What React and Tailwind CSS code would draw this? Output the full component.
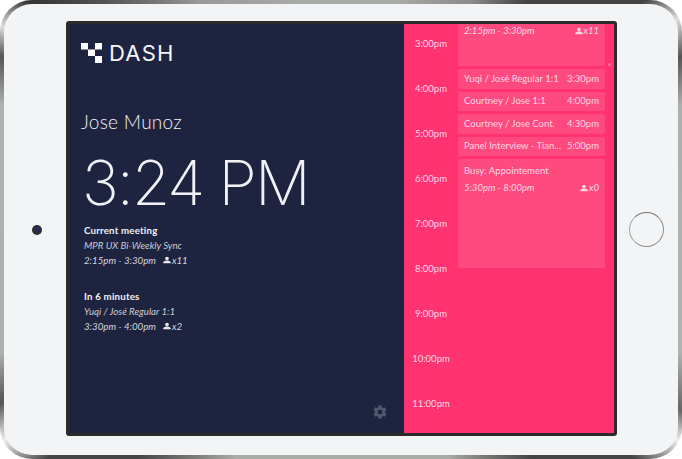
import React from 'react';

const hours = ['3:00pm', '4:00pm', '5:00pm', '6:00pm', '7:00pm', '8:00pm', '9:00pm', '10:00pm', '11:00pm'];

const rows = [
  { title: 'Yuqi / José Regular 1:1', time: '3:30pm' },
  { title: 'Courtney / Jose 1:1', time: '4:00pm' },
  { title: 'Courtney / Jose Cont.', time: '4:30pm' },
  { title: 'Panel Interview - Tian...', time: '5:00pm' },
];

const PersonIcon = ({ className }) => (
  <svg viewBox="0 0 24 24" className={className} fill="currentColor">
    <circle cx="12" cy="7.5" r="5.5" />
    <path d="M1 22v-3c0-3.6 7.3-5.5 11-5.5s11 1.9 11 5.5v3z" />
  </svg>
);

const GearIcon = () => (
  <svg viewBox="0 0 24 24" className="w-[16px] h-[16px] text-[#50566b]" fill="currentColor">
    <path d="M19.4 13c.04-.33.1-.66.1-1s-.06-.67-.1-1l2.1-1.6c.2-.15.25-.42.12-.64l-2-3.46c-.12-.22-.39-.3-.61-.22l-2.49 1c-.52-.4-1.08-.73-1.69-.98l-.38-2.65A.49.49 0 0 0 14 2h-4c-.25 0-.46.18-.49.42l-.38 2.65c-.61.25-1.17.59-1.69.98l-2.49-1a.5.5 0 0 0-.61.22l-2 3.46c-.13.22-.07.49.12.64L4.56 11c-.04.33-.06.66-.06 1s.02.67.06 1l-2.1 1.65c-.19.15-.25.42-.12.64l2 3.46c.12.22.39.3.61.22l2.49-1c.52.4 1.08.73 1.69.98l.38 2.65c.03.24.24.42.49.42h4c.25 0 .46-.18.49-.42l.38-2.65c.61-.25 1.17-.59 1.69-.98l2.49 1c.23.09.49 0 .61-.22l2-3.46c.12-.22.07-.49-.12-.64zM12 15.5a3.5 3.5 0 1 1 0-7 3.5 3.5 0 0 1 0 7z" />
  </svg>
);

const Logo = () => (
  <svg viewBox="0 0 21 20" className="w-[21px] h-[20px]" fill="#fff">
    <rect x="0" y="0" width="7" height="6.5" />
    <rect x="7" y="6.5" width="7" height="6.5" />
    <rect x="14" y="0" width="7" height="6.5" />
    <rect x="14" y="13" width="7" height="7" />
  </svg>
);

function MeetingInfo({ heading, title, time, count }) {
  return (
    <div className="flex flex-col gap-[1px] text-[9.7px] leading-[14px]">
      <div className="font-bold tracking-[0.2px] text-[#f1f2f5]">{heading}</div>
      <div className="italic text-[#c9cbd3]">{title}</div>
      <div className="flex items-center italic text-[#d5d7dd]">
        <span>{time}</span>
        <PersonIcon className="w-[8px] h-[8px] ml-[7px] mr-[1px] text-[#e6e7eb]" />
        <span>{count}</span>
      </div>
    </div>
  );
}

export default function App() {
  return (
    <div className="w-[682px] h-[459px] bg-white font-['Lato','Liberation_Sans',sans-serif]">
      <div className="w-full h-full p-[4px] rounded-[32px] bg-[conic-gradient(#a9aba7_0deg,#a9aba7_14deg,#8a8a88_30deg,#444444_39deg,#444444_53deg,#dddddd_58deg,#555555_63deg,#aeb0ad_70deg,#b0b3b0_110deg,#666666_118deg,#eeeeee_122deg,#444444_128deg,#444444_140deg,#a9aba7_155deg,#a9aba7_205deg,#444444_222deg,#444444_232deg,#eeeeee_238deg,#555555_243deg,#aeb0ad_250deg,#b0b3b0_290deg,#555555_297deg,#dddddd_301deg,#333333_306deg,#555555_314deg,#999999_328deg,#a9aba7_350deg)]">
        <div className="w-full h-full flex items-center rounded-[28px] bg-[#f3f4f6]">
          <div className="w-[62px] flex justify-center pl-[4px]">
            <div className="w-[10px] h-[10px] rounded-full bg-[#2a2d38] flex items-center justify-center">
              <div className="w-[3px] h-[3px] rounded-full bg-[#1c2c78]" />
            </div>
          </div>

          <div className="w-[551px] h-[415px] -mt-[2px] flex rounded-[3px] border-[3px] border-[#2b2b2b] overflow-hidden">
            <div className="w-[335px] flex flex-col bg-[#1e2340] pl-[12px] text-white">
              <div className="flex items-center gap-[7px] mt-[19px]">
                <Logo />
                <span className="font-['Inter','Liberation_Sans',sans-serif] text-[22px] leading-[20px] tracking-[1.2px] font-normal text-[#f4f5f7]">DASH</span>
              </div>
              <div className="mt-[47px] text-[19px] leading-[24px] font-light tracking-[0.3px] text-[#f1f2f5]">Jose Munoz</div>
              <div className="mt-[13px] ml-[1px] font-['Inter','Liberation_Sans',sans-serif] text-[62px] leading-[72px] font-[150] tracking-[-2px] text-[#f1f2f5] whitespace-nowrap">3:24 PM</div>
              <div className="mt-[4px] ml-[3px]">
                <MeetingInfo heading="Current meeting" title="MPR UX Bi-Weekly Sync" time="2:15pm - 3:30pm" count="x11" />
              </div>
              <div className="mt-[22px] ml-[3px]">
                <MeetingInfo heading="In 6 minutes" title="Yuqi / José Regular 1:1" time="3:30pm - 4:00pm" count="x2" />
              </div>
              <div className="mt-auto mb-[13px] pr-[16px] flex justify-end">
                <GearIcon />
              </div>
            </div>

            <div className="relative flex-1 flex bg-[#ff3371] text-[9.5px] text-[#ffd6e2]">
              <div className="w-[54px] shrink-0 flex flex-col -mt-[2px]">
                {hours.map((h) => (
                  <div key={h} className="h-[45px] shrink-0 flex items-center justify-center">{h}</div>
                ))}
              </div>
              <div className="w-[147px] flex flex-col gap-[3px]">
                <div className="h-[42px] px-[6px] rounded-b-[2px] bg-[#ff4a7f] flex justify-between items-start italic leading-[14px]">
                  <span>2:15pm - 3:30pm</span>
                  <span className="flex items-center gap-[1px]"><PersonIcon className="w-[8px] h-[8px]" />x11</span>
                </div>
                {rows.map((r) => (
                  <div key={r.time} className="h-[19.5px] px-[6px] rounded-[2px] bg-[#ff4a7f] flex items-center justify-between whitespace-nowrap">
                    <span>{r.title}</span>
                    <span>{r.time}</span>
                  </div>
                ))}
                <div className="h-[109px] px-[6px] pt-[5px] rounded-[2px] bg-[#ff4a7f] flex flex-col gap-[3px] leading-[14px]">
                  <div>Busy: Appointement</div>
                  <div className="flex justify-between italic">
                    <span>5:30pm - 8:00pm</span>
                    <span className="flex items-center gap-[1px]"><PersonIcon className="w-[8px] h-[8px]" />x0</span>
                  </div>
                </div>
              </div>
              <div className="absolute right-[3px] top-[39px] w-[3px] h-[3px] rounded-full bg-[#ff6f98]" />
            </div>
          </div>

          <div className="flex-1 flex justify-center pr-[3px]">
            <div className="w-[35px] h-[35px] rounded-full border-[1.5px] border-[#8c8c8c] border-t-[#777777] border-l-[#a5a5a5]" />
          </div>
        </div>
      </div>
    </div>
  );
}
